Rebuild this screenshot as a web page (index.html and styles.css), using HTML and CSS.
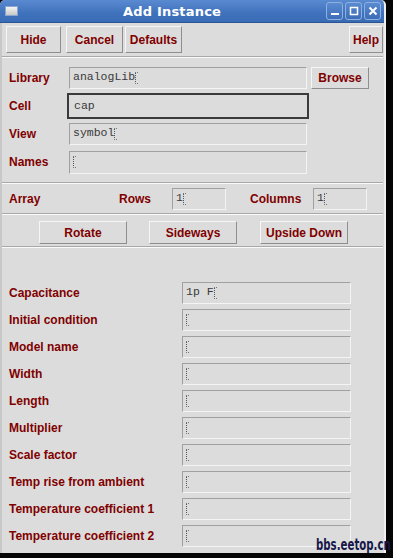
FILE: index.html
```html
<!DOCTYPE html>
<html lang="en">
<head>
    <meta charset="UTF-8">
    <title>Add Instance</title>
    <link rel="stylesheet" href="styles.css">
</head>
<body>
    <div class="window">
        <div class="titlebar">
            <span class="win-icon"></span>
            <span class="title">Add Instance</span>
            <div class="win-btns">
                <span class="win-btn">
                    <svg width="10" height="10" viewBox="0 0 10 10"><rect x="1" y="7" width="8" height="2" fill="#fff"/></svg>
                </span>
                <span class="win-btn">
                    <svg width="10" height="10" viewBox="0 0 10 10"><rect x="1.5" y="1.5" width="7" height="7" fill="none" stroke="#fff" stroke-width="1.5"/></svg>
                </span>
                <span class="win-btn">
                    <svg width="10" height="10" viewBox="0 0 10 10"><path d="M1.5 1.5 L8.5 8.5 M8.5 1.5 L1.5 8.5" stroke="#fff" stroke-width="2"/></svg>
                </span>
            </div>
        </div>

        <div class="body">
            <!-- top command buttons -->
            <div class="toolbar">
                <button class="btn btn-hide">Hide</button>
                <button class="btn btn-cancel">Cancel</button>
                <button class="btn btn-defaults">Defaults</button>
                <span class="spacer"></span>
                <button class="btn btn-help">Help</button>
            </div>
            <div class="sep"></div>

            <div class="cellview">
                <div class="cv-row">
                    <label class="lbl">Library</label>
                    <div class="field">analogLib<span class="caret"></span></div>
                    <button class="btn btn-browse">Browse</button>
                </div>
                <div class="cv-row">
                    <label class="lbl">Cell</label>
                    <div class="field focus">cap</div>
                </div>
                <div class="cv-row">
                    <label class="lbl">View</label>
                    <div class="field">symbol<span class="caret"></span></div>
                </div>
                <div class="cv-row">
                    <label class="lbl">Names</label>
                    <div class="field"><span class="caret"></span></div>
                </div>
            </div>
            <div class="sep"></div>

            <div class="array-row">
                <label class="lbl lbl-array">Array</label>
                <label class="lbl lbl-rows">Rows</label>
                <div class="field small">1<span class="caret"></span></div>
                <label class="lbl lbl-cols">Columns</label>
                <div class="field small">1<span class="caret"></span></div>
            </div>
            <div class="sep"></div>

            <div class="orient-row">
                <button class="btn btn-orient">Rotate</button>
                <button class="btn btn-orient">Sideways</button>
                <button class="btn btn-orient">Upside Down</button>
            </div>
            <div class="sep"></div>

            <div class="params">
                <div class="p-row">
                    <label class="lbl">Capacitance</label>
                    <div class="field">1p F<span class="caret"></span></div>
                </div>
                <div class="p-row">
                    <label class="lbl">Initial condition</label>
                    <div class="field"><span class="caret"></span></div>
                </div>
                <div class="p-row">
                    <label class="lbl">Model name</label>
                    <div class="field"><span class="caret"></span></div>
                </div>
                <div class="p-row">
                    <label class="lbl">Width</label>
                    <div class="field"><span class="caret"></span></div>
                </div>
                <div class="p-row">
                    <label class="lbl">Length</label>
                    <div class="field"><span class="caret"></span></div>
                </div>
                <div class="p-row">
                    <label class="lbl">Multiplier</label>
                    <div class="field"><span class="caret"></span></div>
                </div>
                <div class="p-row">
                    <label class="lbl">Scale factor</label>
                    <div class="field"><span class="caret"></span></div>
                </div>
                <div class="p-row">
                    <label class="lbl">Temp rise from ambient</label>
                    <div class="field"><span class="caret"></span></div>
                </div>
                <div class="p-row">
                    <label class="lbl">Temperature coefficient 1</label>
                    <div class="field"><span class="caret"></span></div>
                </div>
                <div class="p-row">
                    <label class="lbl">Temperature coefficient 2</label>
                    <div class="field"><span class="caret"></span></div>
                </div>
            </div>
        </div>
    </div>

    <div class="watermark">bbs.eetop.cn</div>
</body>
</html>
```

FILE: styles.css
```css
* {
    margin: 0;
    padding: 0;
    box-sizing: border-box;
}

body {
    background: #050505;
    width: 393px;
    height: 558px;
    overflow: hidden;
    position: relative;
    font-family: "Liberation Sans", Arial, sans-serif;
}

.window {
    width: 386px;
    height: 553px;
    background: #dcdcdc;
    border-radius: 5px 5px 0 0;
    overflow: hidden;
    display: flex;
    flex-direction: column;
    border-right: 2px solid #f0f0f0;
}

/* title bar */
.titlebar {
    height: 23px;
    flex: none;
    background: linear-gradient(#5a8ad0, #3f72bc 60%, #3a6cb5);
    border-bottom: 1px solid #2a5595;
    display: flex;
    align-items: center;
    position: relative;
    padding-left: 5px;
}

.win-icon {
    flex: none;
    width: 13px;
    height: 10px;
    background: linear-gradient(#f4f4f4, #c8c8c8);
    border: 1px solid #8aa6d0;
}

.title {
    position: absolute;
    left: 0;
    right: 0;
    text-align: center;
    color: #fff;
    font-family: "DejaVu Sans", sans-serif;
    font-weight: bold;
    font-size: 13px;
    letter-spacing: 0.2px;
    padding-right: 40px;
}

.win-btns {
    margin-left: auto;
    margin-right: 3px;
    display: flex;
    gap: 2px;
    position: relative;
}

.win-btn {
    flex: none;
    width: 17px;
    height: 18px;
    border: 1px solid #8fb1e0;
    border-radius: 3px;
    background: linear-gradient(#5a8ad0, #3c6db7);
    display: flex;
    align-items: center;
    justify-content: center;
}

.body {
    flex: 1;
    border-left: 2px solid #c8c8c8;
    display: flex;
    flex-direction: column;
    padding-top: 3px;
}

/* buttons */
.btn {
    font-family: "Liberation Sans", Arial, sans-serif;
    font-weight: bold;
    font-size: 12px;
    color: #800000;
    background: #dcdcdc;
    border: 1px solid;
    border-color: #f6f6f6 #8e8e8e #8e8e8e #f6f6f6;
    height: 27px;
}

.toolbar {
    display: flex;
    padding: 0 1px 0 4px;
    height: 27px;
}

.btn-hide { width: 55px; }
.btn-cancel { width: 57px; margin-left: 5px; }
.btn-defaults { width: 57px; margin-left: 2px; }
.btn-help { width: 34px; }

.spacer { flex: 1; }

.sep {
    height: 2px;
    border-top: 1px solid #a8a8a8;
    border-bottom: 1px solid #fafafa;
    margin-right: 1px;
    flex: none;
}

.toolbar + .sep { margin-top: 3px; }

/* labels and fields */
.lbl {
    font-weight: bold;
    font-size: 12px;
    color: #800000;
    white-space: nowrap;
}

.field {
    height: 22px;
    border: 1px solid;
    border-color: #a0a0a0 #f4f4f4 #f4f4f4 #a0a0a0;
    background: #dcdcdc;
    font-family: "Liberation Mono", "Courier New", monospace;
    font-size: 11.5px;
    color: #3a3a3a;
    padding: 2px 0 0 3px;
    display: flex;
    align-items: flex-start;
}

.field.focus {
    height: 26px;
    border: 2px solid #3a3a3a;
    padding: 4px 0 0 5px;
    width: 242px;
}

.caret {
    display: inline-block;
    width: 3px;
    height: 12px;
    margin-top: 2px;
    border-left: 1px dotted #555;
    border-top: 1px dotted #777;
    border-bottom: 1px dotted #777;
}

/* cell view section */
.cellview {
    padding: 9px 0 8px 7px;
    display: flex;
    flex-direction: column;
    gap: 4px;
}

.cv-row {
    display: flex;
    align-items: center;
}

.cv-row .lbl { width: 58px; }

.cv-row .field { width: 238px; margin-left: 2px; }
.cv-row .field.focus { width: 242px; margin-left: 0; }

.cv-row:last-child .field { margin-top: 2px; height: 23px; }

.btn-browse {
    width: 58px;
    height: 22px;
    margin-left: 4px;
    font-size: 12px;
}

/* array */
.array-row {
    display: flex;
    align-items: center;
    padding: 4px 0 3px 7px;
}

.field.small { width: 54px; padding-left: 3px; }

.lbl-array { width: 110px; }
.lbl-rows { width: 53px; }
.lbl-cols { margin-left: 24px; width: 63px; }

/* orientation */
.orient-row {
    display: flex;
    padding: 6px 0 2px 37px;
    gap: 22px;
}

.btn-orient {
    width: 88px;
    height: 23px;
}

.btn-orient:last-child { margin-left: 1px; }

/* component parameters */
.params {
    padding: 34px 0 0 7px;
    display: flex;
    flex-direction: column;
    gap: 5px;
}

.p-row {
    display: flex;
    align-items: center;
}

.p-row .lbl { width: 173px; }

.p-row .field { width: 169px; }

.watermark {
    position: absolute;
    left: 316px;
    top: 536px;
    font-family: "DejaVu Sans", sans-serif;
    font-weight: bold;
    font-size: 15px;
    color: #17174a;
    white-space: nowrap;
    transform: scaleX(0.68);
    transform-origin: left top;
}
```
